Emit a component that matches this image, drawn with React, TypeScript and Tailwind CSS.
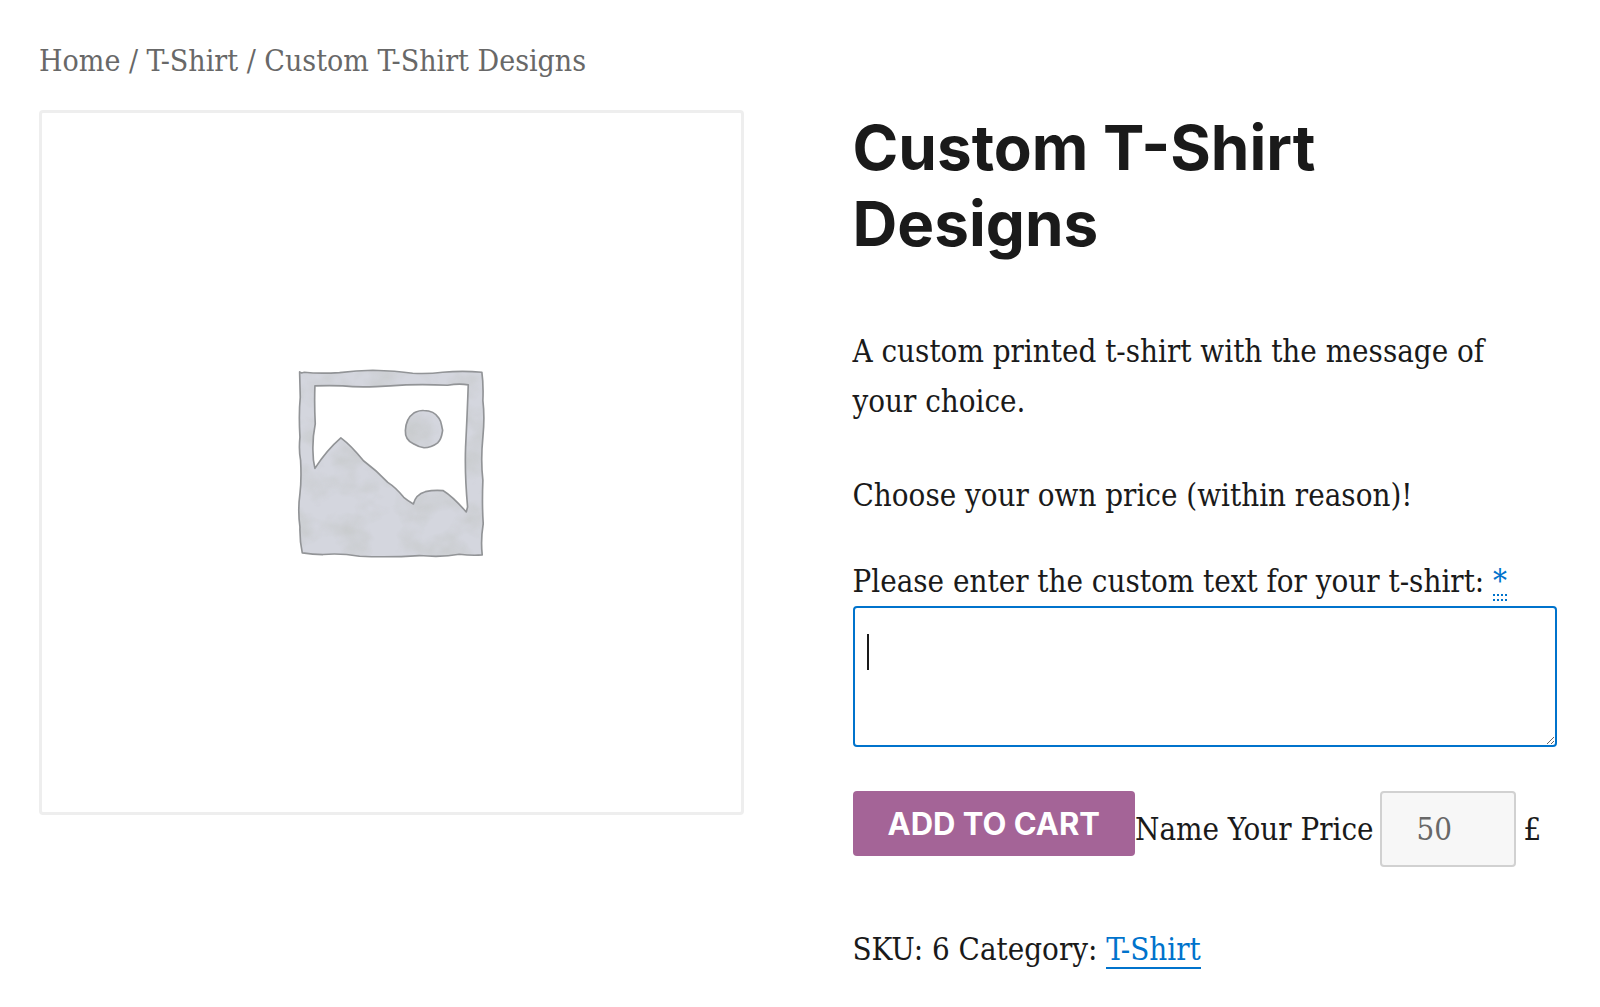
import React from "react";

const PlaceholderImage = () => (
  <svg viewBox="-14 -14 700 700" className="w-1/3" role="img" aria-label="Awaiting product image">
    <defs>
      <filter id="wash" x="0" y="0" width="100%" height="100%" colorInterpolationFilters="sRGB">
        <feTurbulence type="fractalNoise" baseFrequency="0.011 0.014" numOctaves="3" seed="4" />
        <feColorMatrix values="0 0 0 0 0.79  0 0 0 0 0.8  0 0 0 0 0.81  2.2 0 0 0 -0.9" />
        <feComposite in2="SourceGraphic" operator="in" />
      </filter>
      <path
        id="frame"
        d="M60 64 L66 67 L74 65 Q120 70 180 66 Q230 60 280 59 Q350 61 400 68 Q450 70 490 65 Q550 60 608 65 Q613 100 611 150 Q617 200 611 260 Q604 330 611 390 Q608 460 612 520 Q604 570 609 614 Q580 617 540 612 Q490 622 420 616 Q330 622 240 618 Q180 608 130 613 Q100 613 68 608 Q60 570 61 530 Q54 480 61 430 Q66 390 63 330 Q57 300 61 260 Q57 190 62 140 Z
        M106 106 Q104 160 107 220 Q99 260 100 300 Q100 330 106 354 Q140 300 184 262 Q215 285 252 331 Q290 359 325 396 Q350 412 373 441 Q385 451 402 461 Q409 432 438 424 Q465 418 492 421 Q520 438 561 485 L565 470 Q556 370 559 290 Q564 190 567 103 Q540 98 505 104 Q440 101 380 103 Q330 106 290 108 Q230 110 190 106 Q150 104 106 106 Z"
      />
      <path
        id="sun"
        d="M404 187 C414 183 418 179 433 180 C456 180 470 189 479 203 C487 213 486 226 490 239 C488 251 487 266 475 277 C462 287 449 292 434 292 C420 290 412 286 402 280 C385 272 377 258 378 240 C379 215 388 198 404 187 Z"
      />
    </defs>
    <g fill="#d4d6de" fillRule="evenodd">
      <use href="#frame" />
      <use href="#sun" />
    </g>
    <g fill="#d4d6de" fillRule="evenodd" filter="url(#wash)">
      <use href="#frame" />
      <use href="#sun" />
    </g>
    <g fill="none" stroke="#929497" strokeWidth="5" strokeLinejoin="round">
      <use href="#frame" />
      <use href="#sun" />
    </g>
  </svg>
);

const App = () => {
  return (
    <div className="bg-white pl-[39px] pr-[43px] pt-9 pb-7 font-['DejaVu_Serif_Condensed','DejaVu_Serif',serif] text-[31px] leading-[50px] text-[#1a1a1a]">
      <nav aria-label="Breadcrumb" className="text-[30px] text-[#686868]">
        <a href="#home">Home</a> / <a href="#t-shirt">T-Shirt</a> / Custom T-Shirt Designs
      </nav>

      <main className="mt-6 grid grid-cols-2 items-start gap-[109px]">
        <div className="flex aspect-square items-center justify-center rounded-sm border-3 border-[#eeeeee]">
          <PlaceholderImage />
        </div>

        <div>
          <h1 className="font-['Inter','Open_Sans',sans-serif] text-[62px] leading-[76px] font-bold">
            Custom T-Shirt Designs
          </h1>

          <div className="mt-16 flex flex-col gap-11 pr-8">
            <p>A custom printed t-shirt with the message of your choice.</p>
            <p>Choose your own price (within reason)!</p>
          </div>

          <form className="mt-9" onSubmit={(e) => e.preventDefault()}>
            <label htmlFor="custom-text" className="block">
              Please enter the custom text for your t-shirt:{" "}
              <abbr
                title="required"
                className="border-b-2 border-dotted border-[#0073cc] text-[#0073cc] underline decoration-dotted decoration-2 underline-offset-2"
              >
                *
              </abbr>
            </label>
            <div className="relative">
              <textarea
                id="custom-text"
                className="block h-[141px] w-full resize-y rounded-sm border-2 border-[#0073cc] px-3 py-5 outline-none"
              />
              <span className="absolute top-7 left-[14px] h-9 w-[2px] bg-[#1a1a1a]" />
            </div>

            <div className="mt-11 flex items-start whitespace-nowrap">
              <button
                type="submit"
                className="rounded bg-[#a46497] px-[35px] font-['Inter','Open_Sans',sans-serif] leading-[65px] font-bold text-white"
              >
                ADD TO CART
              </button>
              <div className="flex items-center">
                <label htmlFor="price">Name Your Price</label>
                <input
                  id="price"
                  type="text"
                  inputMode="decimal"
                  defaultValue="50"
                  className="mr-2 ml-1.5 h-[76px] w-[136px] rounded-sm border-2 border-[#d1d1d1] bg-[#f7f7f7] px-[35px] text-[#686868] outline-none"
                />
                £
              </div>
            </div>
          </form>

          <div className="mt-[57px]">
            SKU: 6 Category:{" "}
            <a href="#t-shirt" className="border-b-2 border-[#0073cc] text-[#0073cc]">
              T-Shirt
            </a>
          </div>
        </div>
      </main>
    </div>
  );
};

export default App;
